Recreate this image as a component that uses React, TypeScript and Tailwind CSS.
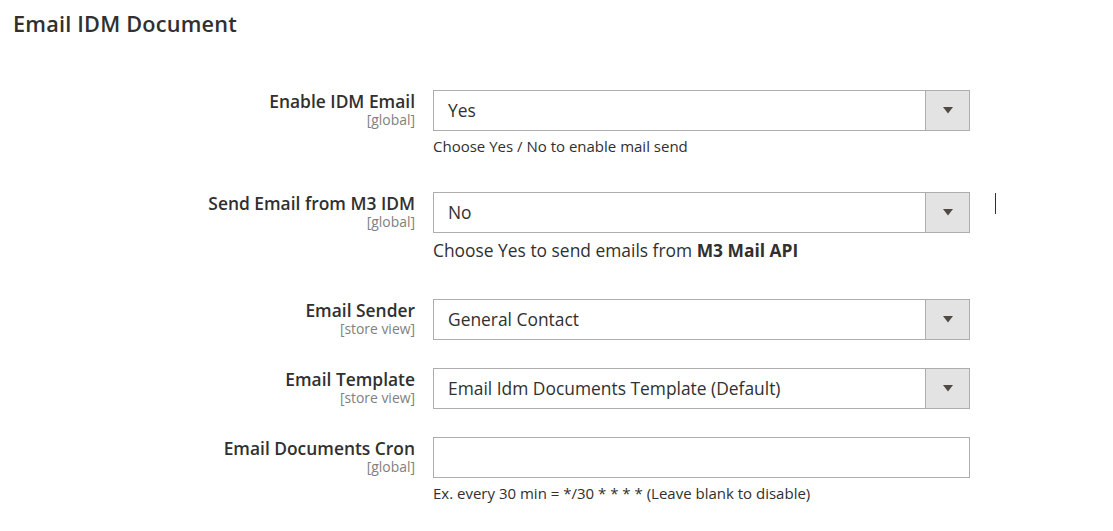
import React from "react";

const font = { fontFamily: '"Open Sans", "Noto Sans", sans-serif' };

function Arrow() {
  return (
    <div className="w-[44px] h-full bg-[#e3e3e3] border-l border-[#adadad] flex items-center justify-center">
      <svg width="10" height="7" viewBox="0 0 10 7">
        <polygon points="0,0 10,0 5,6.5" fill="#514943" />
      </svg>
    </div>
  );
}

function Select({ value }: { value: string }) {
  return (
    <div className="h-[41px] w-[537px] border border-[#adadad] bg-white flex items-stretch">
      <div className="flex-1 flex items-center pl-[14px] text-[17.4px] text-[#303030]">{value}</div>
      <Arrow />
    </div>
  );
}

function Label({ title, scope }: { title: string; scope: string }) {
  return (
    <div className="w-[415px] shrink-0 text-right pt-[1px]">
      <div className="text-[17.4px] leading-[20px] font-semibold text-[#303030]">{title}</div>
      <div className="text-[13.9px] leading-[17px] text-[#808080]">{scope}</div>
    </div>
  );
}

export default function App() {
  return (
    <div className="w-[1113px] h-[531px] bg-white relative overflow-hidden" style={font}>
      <h1 className="pl-[13px] pt-[10px] text-[21.7px] leading-[28px] font-semibold text-[#303030] tracking-[0.2px]">
        Email IDM Document
      </h1>
      <div className="mt-[52px] flex flex-col">
        <div className="flex gap-[18px]">
          <Label title="Enable IDM Email" scope="[global]" />
          <div>
            <Select value="Yes" />
            <div className="mt-[6px] text-[15px] leading-[18px] text-[#303030]">Choose Yes / No to enable mail send</div>
          </div>
        </div>
        <div className="flex gap-[18px] mt-[37px]">
          <Label title="Send Email from M3 IDM" scope="[global]" />
          <div>
            <Select value="No" />
            <div className="mt-[5px] text-[17.4px] leading-[24px] text-[#303030]">
              Choose Yes to send emails from <span className="font-bold">M3 Mail API</span>
            </div>
          </div>
          <div className="ml-[7px] mt-[1px] w-[1px] h-[21px] bg-[#303030]" />
        </div>
        <div className="flex gap-[18px] mt-[37px]">
          <Label title="Email Sender" scope="[store view]" />
          <Select value="General Contact" />
        </div>
        <div className="flex gap-[18px] mt-[28px]">
          <Label title="Email Template" scope="[store view]" />
          <Select value="Email Idm Documents Template (Default)" />
        </div>
        <div className="flex gap-[18px] mt-[28px]">
          <Label title="Email Documents Cron" scope="[global]" />
          <div>
            <div className="h-[41px] w-[537px] border border-[#adadad] bg-white" />
            <div className="mt-[6px] text-[15px] leading-[18px] text-[#303030]">
              Ex. every 30 min = */30 * * * * (Leave blank to disable)
            </div>
          </div>
        </div>
      </div>
    </div>
  );
}
